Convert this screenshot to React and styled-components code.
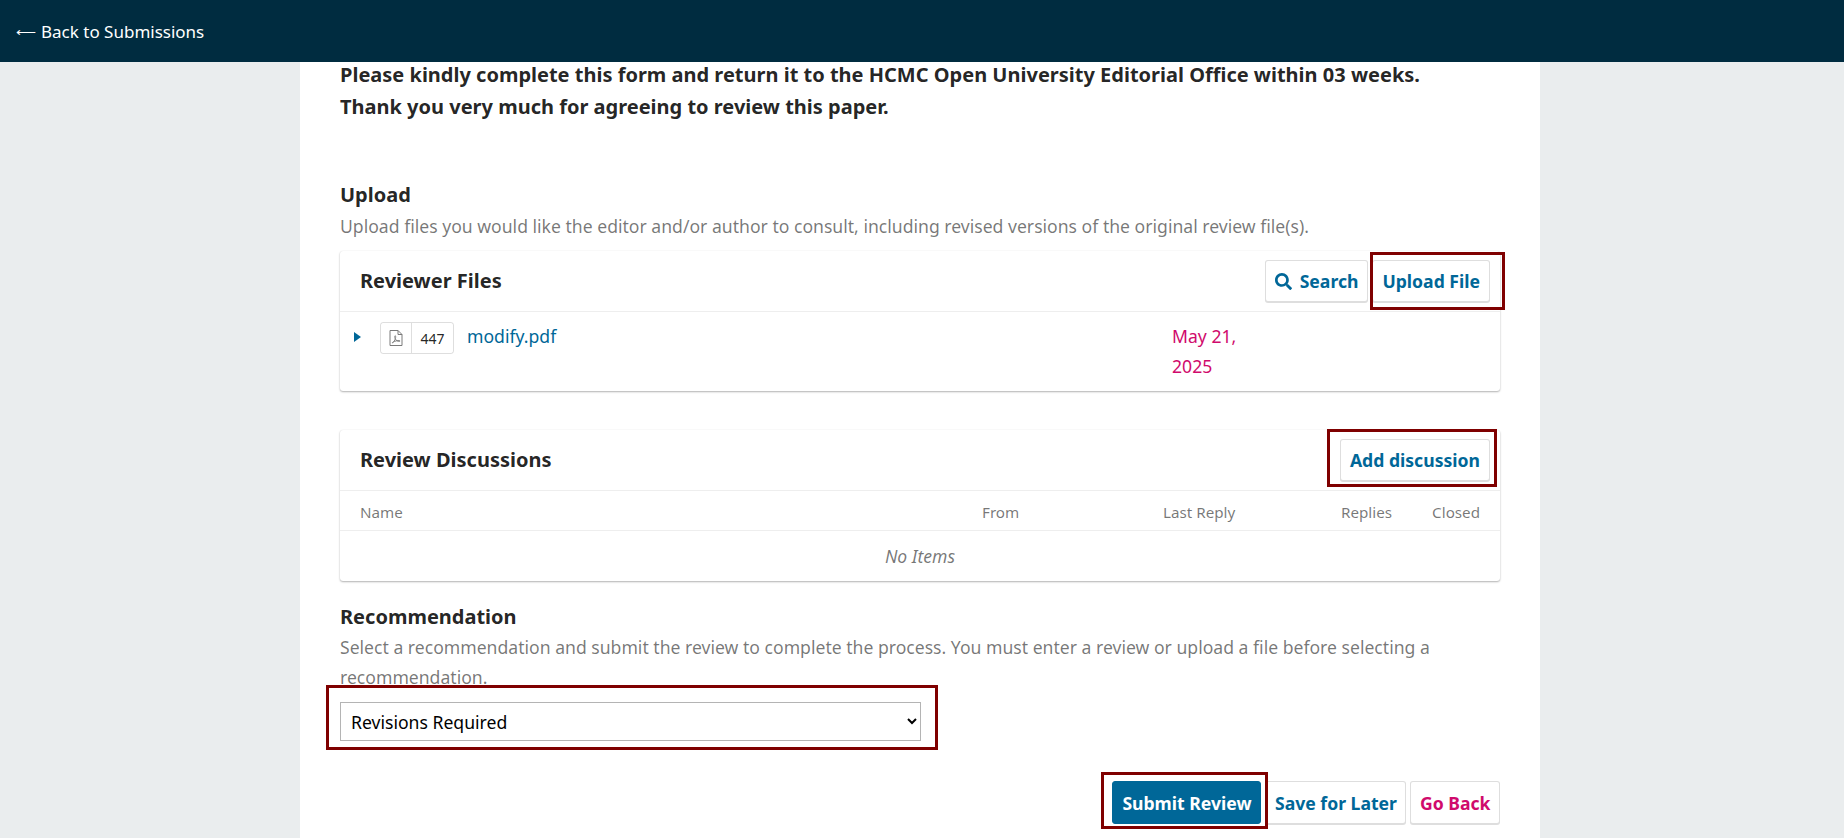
import React from "react";
import styled, { createGlobalStyle } from "styled-components";
import { FaSearch } from "react-icons/fa";

const Global = createGlobalStyle`
  html, body { margin: 0; padding: 0; height: 838px; overflow: hidden; background: #eaedee; }
  body { font-family: "Noto Sans", sans-serif; font-size: 17.6px; color: rgba(0,0,0,.87); }
`;

const Page = styled.div`height: 838px; overflow: hidden; display: flex; flex-direction: column;`;
const TopBar = styled.header`
  height: 62px; box-sizing: border-box; flex: none; background: #002c40; display: flex; align-items: center; padding: 2px 16px 0;
`;
const BackLink = styled.a`color: #fff; font-size: 17px; line-height: 24px; white-space: nowrap; display: flex; align-items: center; gap: 5px;`;
const BackArrow = styled.span`font-size: 14px;`;
const Sheet = styled.main`
  width: 1160px; margin-left: 300px; flex: 1; background: #fff; padding: 0 40px; min-height: 0;
  display: flex; flex-direction: column;
`;
const Intro = styled.p`
  margin: -3px 0 0; font-size: 20px; font-weight: 700; line-height: 32px; color: rgba(0,0,0,.87);
`;
const SectionTitle = styled.h2`
  margin: ${p => p.$top}px 0 0; font-size: 20px; font-weight: 700; line-height: 30px; color: rgba(0,0,0,.87);
`;
const Hint = styled.p`
  margin: ${p => p.$top ?? 1}px 0 0; font-size: 17.6px; line-height: 30px; color: rgba(0,0,0,.54);
`;
const Card = styled.section`
  margin-top: ${p => p.$top}px; background: #fff; border-radius: 3px;
  box-shadow: 0 1px 2px rgba(0,0,0,.3), 0 0 1px rgba(0,0,0,.1);
`;
const CardHeader = styled.div`
  height: 60px; display: flex; align-items: center; justify-content: space-between;
  padding: 0 10px 0 20px; border-bottom: 1px solid #eee; box-sizing: content-box;
`;
const CardTitle = styled.h3`margin: 0; font-size: 20px; font-weight: 700; line-height: 24px; color: rgba(0,0,0,.87);`;
const Actions = styled.div`display: flex; gap: 4px; align-items: center;`;
const Highlight = styled.span`
  position: relative; display: ${p => p.$block ? "block" : "inline-flex"};
  &::after {
    content: ""; position: absolute; pointer-events: none; border: 3px solid #7f0000;
    top: ${p => p.$t}px; right: ${p => p.$r}px; bottom: ${p => p.$b}px; left: ${p => p.$l}px;
  }
`;
const Button = styled.button`
  height: ${p => p.$h ?? 42}px; box-sizing: border-box; padding: 0 ${p => p.$pad ?? 9}px; background: ${p => p.$primary ? "#006798" : "#fff"};
  border: 1px solid ${p => p.$primary ? "#006798" : "rgba(0,0,0,.13)"};
  box-shadow: ${p => p.$primary ? "none" : "0 1px 0 rgba(0,0,0,.13)"}; border-radius: 3px;
  color: ${p => p.$primary ? "#fff" : p.$danger ? "#d00a6c" : "#006798"};
  font: 700 17.6px/24px "Noto Sans", sans-serif; display: inline-flex; align-items: center; gap: 8px; white-space: nowrap;
  svg { font-size: 17px; }
`;
const FileRow = styled.div`
  height: 79px; box-sizing: border-box; display: flex; align-items: flex-start; padding: 10px 0 0 14px; 
`;
const Toggle = styled.span`
  width: 0; height: 0; margin-top: 10px; border-style: solid; border-width: 5px 0 5px 7px;
  border-color: transparent transparent transparent #006798; flex: none;
`;
const Badge = styled.span`
  margin-left: 19px; height: 32px; width: 74px; box-sizing: border-box; flex: none; display: flex; align-items: stretch;
  border: 1px solid rgba(0,0,0,.13); border-radius: 3px; font-size: 14px; color: rgba(0,0,0,.87);
`;
const BadgeIcon = styled.span`
  width: 30px; flex: none; display: flex; align-items: center; justify-content: center;
  border-right: 1px solid rgba(0,0,0,.13);
`;
const BadgeCount = styled.span`flex: 1; display: flex; align-items: center; justify-content: center;`;
const FileName = styled.a`margin: -1px 0 0 13px; width: 705px; flex: none; color: #006798; font-size: 17.6px; line-height: 30px;`;
const FileDate = styled.span`margin-top: -1px; width: 80px; color: #d00a6c; font-size: 17.6px; line-height: 30px;`;
const TableHead = styled.div`
  height: 39px; box-sizing: content-box; display: grid; grid-template-columns: 622px 181px 100px 1fr 88px; align-items: center;
  padding: 0 20px; border-bottom: 1px solid #eee; font-size: 15.2px; color: rgba(0,0,0,.54);
`;
const HeadCell = styled.span`padding-top: 3px; text-align: ${p => p.$right ? "right" : "left"}; white-space: nowrap;`;
const Empty = styled.div`
  height: 50px; display: flex; align-items: center; justify-content: center; font-size: 17.6px; font-style: italic; color: rgba(0,0,0,.54);
`;
const Select = styled.select`
  display: block; width: 581px; height: 39px; box-sizing: border-box; background: #fff; padding: 0 6px; border: 1px solid #b4b4b4; border-radius: 0;
  font: 400 17.6px "Noto Sans", sans-serif; color: #000;
`;
const SelectWrap = styled.div`margin-top: 10px; width: 581px;`;
const Footer = styled.div`margin-top: 40px; display: flex; justify-content: flex-end; gap: 4px;`;

const PdfIcon = () => (
  <svg width="14" height="16" viewBox="0 0 14 16" fill="none" stroke="#7a7a7a" strokeWidth="1">
    <path d="M1 .5h8l4 4v11H1z" />
    <path d="M9 .5v4h4" />
    <path d="M3.5 12.8c1.2-.5 2.3-2.4 3-4.6.3-1 .2-2.6-.3-2.6s-.6 1.5-.2 2.7c.5 1.4 1.5 2.4 2.6 2.9 1 .4 2.5.4 2.5-.2s-1.7-.7-3.2-.3c-1.6.4-3.3 1-4.3 1.7-.6.5-.5.7-.1.4z" strokeWidth=".9" />
  </svg>
);

export default function App() {
  return (
    <Page>
      <Global />
      <TopBar><BackLink><BackArrow>⟵</BackArrow> Back to Submissions</BackLink></TopBar>
      <Sheet>
        <Intro>
          Please kindly complete this form and return it to the HCMC Open University Editorial Office within 03 weeks.<br />
          Thank you very much for agreeing to review this paper.
        </Intro>
        <SectionTitle $top={57}>Upload</SectionTitle>
        <Hint>Upload files you would like the editor and/or author to consult, including revised versions of the original review file(s).</Hint>
        <Card $top={10}>
          <CardHeader>
            <CardTitle>Reviewer Files</CardTitle>
            <Actions>
              <Button><FaSearch /> Search</Button>
              <Highlight $t={-8} $r={-15} $b={-8} $l={-2}><Button>Upload File</Button></Highlight>
            </Actions>
          </CardHeader>
          <FileRow>
            <Toggle />
            <Badge>
              <BadgeIcon><PdfIcon /></BadgeIcon>
              <BadgeCount>447</BadgeCount>
            </Badge>
            <FileName>modify.pdf</FileName>
            <FileDate>May 21, 2025</FileDate>
          </FileRow>
        </Card>
        <Card $top={39}>
          <CardHeader>
            <CardTitle>Review Discussions</CardTitle>
            <Actions>
              <Highlight $t={-10} $r={-7} $b={-6} $l={-13}><Button>Add discussion</Button></Highlight>
            </Actions>
          </CardHeader>
          <TableHead>
            <HeadCell>Name</HeadCell>
            <HeadCell>From</HeadCell>
            <HeadCell>Last Reply</HeadCell>
            <HeadCell $right>Replies</HeadCell>
            <HeadCell $right>Closed</HeadCell>
          </TableHead>
          <Empty>No Items</Empty>
        </Card>
        <SectionTitle $top={21}>Recommendation</SectionTitle>
        <Hint $top={0}>Select a recommendation and submit the review to complete the process. You must enter a review or upload a file before selecting a recommendation.</Hint>
        <SelectWrap>
          <Highlight $block $t={-17} $r={-17} $b={-9} $l={-14}>
            <Select defaultValue="r"><option value="r">Revisions Required</option></Select>
          </Highlight>
        </SelectWrap>
        <Footer>
          <Highlight $t={-9} $r={-7} $b={-5} $l={-11}><Button $h={43} $primary>Submit Review</Button></Highlight>
          <Button $h={43} $pad={8.5}>Save for Later</Button>
          <Button $h={43} $pad={8.5} $danger>Go Back</Button>
        </Footer>
      </Sheet>
    </Page>
  );
}
